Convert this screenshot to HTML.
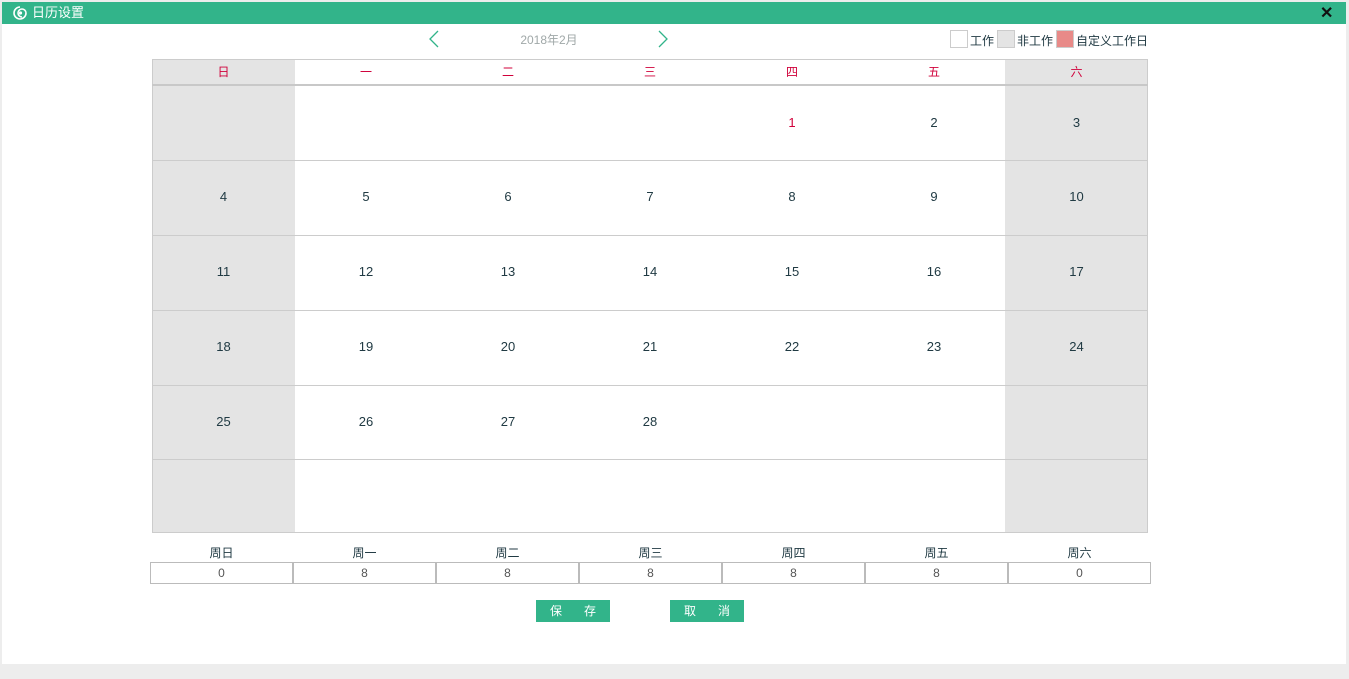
<!DOCTYPE html>
<html><head><meta charset="utf-8"><style>
*{margin:0;padding:0;box-sizing:border-box}
body{width:1349px;height:679px;background:#ededed;position:relative;overflow:hidden;font-family:"Liberation Sans","Noto Sans CJK SC",sans-serif;font-size:13px;color:#203a43}
.dlg{position:absolute;left:2px;top:2px;width:1344px;height:662px;background:#fff}
.hd{position:absolute;left:2px;top:2px;width:1344px;height:22px;background:#32b48a;color:#fff;font-size:13px;line-height:22px;padding-left:30px}
.a{position:absolute}
.cell{position:absolute;text-align:center;font-size:13px}
.wk{position:absolute;top:59px;height:26px;line-height:26px;text-align:center;color:#d0003a;font-size:12px}
.inp{position:absolute;top:562px;height:22px;border:1px solid #bbb;text-align:center;line-height:20px;color:#555;font-size:12px}
.lbl{position:absolute;top:544px;text-align:center;font-size:12px;color:#203a43}
.btn{position:absolute;top:600px;width:74px;height:22px;background:#32b48a;color:#fff;font-size:12px;line-height:22px;display:flex;justify-content:space-between;padding:0 14px}
.lg{position:absolute;top:32px;font-size:12px}
</style></head><body>
<div class="dlg"></div>
<div class="hd">日历设置</div>
<svg class="a" style="left:12px;top:5px" width="16" height="16" viewBox="0 0 16 16"><path d="M8 2a6 6 0 1 0 6 6a4 4 0 1 0-4 4" fill="none" stroke="#fff" stroke-width="1.6"/><circle cx="8.5" cy="8" r="1.6" fill="#fff"/></svg>
<div class="a" style="left:1320px;top:3px;color:#111;font-size:16px;font-weight:bold">✕</div>
<svg class="a" style="left:428px;top:30px" width="12" height="18"><path d="M10 1 L2 9 L10 17" fill="none" stroke="#32b48a" stroke-width="1.3"/></svg>
<svg class="a" style="left:657px;top:30px" width="12" height="18"><path d="M2 1 L10 9 L2 17" fill="none" stroke="#32b48a" stroke-width="1.3"/></svg>
<div class="a" style="left:500px;top:31px;width:98px;text-align:center;color:#a0a8a8;font-size:12px">2018年2月</div>
<div class="a" style="left:950px;top:30px;width:18px;height:18px;border:1px solid #ccc;background:#fff"></div>
<div class="lg" style="left:970px">工作</div>
<div class="a" style="left:997px;top:30px;width:18px;height:18px;border:1px solid #ccc;background:#e4e4e4"></div>
<div class="lg" style="left:1017px">非工作</div>
<div class="a" style="left:1056px;top:30px;width:18px;height:18px;border:1px solid #ccc;background:#e88a88"></div>
<div class="lg" style="left:1076px">自定义工作日</div>
<div id="cal"></div>
<script>
var xs=[152,295,437,579,721,863,1005,1148];
var h='';var names=['日','一','二','三','四','五','六'];
for(var c=0;c<7;c++){var w=xs[c+1]-xs[c];var bg=(c==0||c==6)?'#e4e4e4':'#fff';
h+='<div class="a" style="left:'+xs[c]+'px;top:59px;width:'+w+'px;height:473px;background:'+bg+'"></div>';
h+='<div class="wk" style="left:'+xs[c]+'px;width:'+w+'px">'+names[c]+'</div>';
if(c>0&&c<6)h+='<div class="a" style="left:'+xs[c+1]+'px;top:85px;width:1px;height:447px;background:#ececec"></div>';}
h+='<div class="a" style="left:152px;top:59px;width:996px;height:474px;border:1px solid #ccc"></div>';
h+='<div class="a" style="left:152px;top:84px;width:996px;height:2px;background:#c8c8c8"></div>';
var rows=[86,160,235,310,385,459,532];
for(var r=1;r<6;r++)h+='<div class="a" style="left:152px;top:'+rows[r]+'px;width:996px;height:1px;background:#ccc"></div>';
for(var r=0;r<6;r++)for(var c=0;c<7;c++){var day=r*7+c-3;
if(day>=1&&day<=28){var col=day==1?'#d0003a':'#203a43';
h+='<div class="cell" style="left:'+xs[c]+'px;width:'+(xs[c+1]-xs[c])+'px;top:'+(rows[r]+29)+'px;color:'+col+'">'+day+'</div>';}}
var wn=['周日','周一','周二','周三','周四','周五','周六'];var vals=[0,8,8,8,8,8,0];
for(var c=0;c<7;c++){var L=150+c*143;
h+='<div class="lbl" style="left:'+L+'px;width:143px">'+wn[c]+'</div>';
h+='<div class="inp" style="left:'+L+'px;width:143px">'+vals[c]+'</div>';}
document.getElementById('cal').innerHTML=h;
</script>
<div class="btn" style="left:536px"><span>保</span><span>存</span></div>
<div class="btn" style="left:670px"><span>取</span><span>消</span></div>
</body></html>
